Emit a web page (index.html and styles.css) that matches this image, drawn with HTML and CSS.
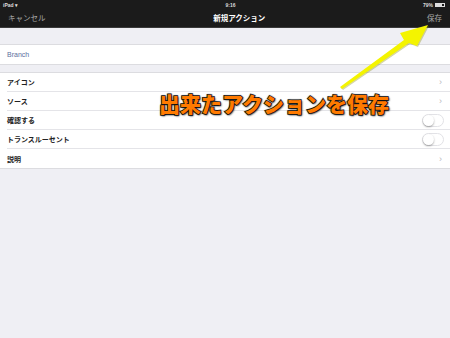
FILE: index.html
```html
<!DOCTYPE html>
<html lang="ja">
  <head>
    <meta charset="UTF-8" />
    <title>新規アクション</title>
    <link rel="stylesheet" href="styles.css">
  </head>
  <body>
    <header class="topbar">
      <div class="status">
        <span class="status-left">iPad <span class="wifi">&#9662;</span></span>
        <span class="status-time">9:16</span>
        <span class="status-right">79% <span class="battery"><span class="battery-level"></span></span></span>
      </div>
      <nav class="navbar">
        <span class="nav-btn">キャンセル</span>
        <span class="nav-title">新規アクション</span>
        <span class="nav-btn">保存</span>
      </nav>
    </header>

    <section class="group group-first">
      <div class="row"><span class="row-input">Branch</span></div>
    </section>

    <section class="group">
      <div class="row"><span>アイコン</span><span class="chevron">&#8250;</span></div>
      <div class="row"><span>ソース</span><span class="chevron">&#8250;</span></div>
      <div class="row"><span>確認する</span><span class="switch"></span></div>
      <div class="row"><span>トランスルーセント</span><span class="switch"></span></div>
      <div class="row"><span>説明</span><span class="chevron">&#8250;</span></div>
    </section>

    <svg class="arrow" width="450" height="338" viewBox="0 0 450 338">
      <polygon points="340,87 404,40 400,33 428,25 417,46 409,43 342,89" fill="#8a8a00" opacity="0.35" transform="translate(1,1)" />
      <polygon points="340,87 404,40 400,33 428,25 417,46 409,43 342,89" fill="#f4f400" />
    </svg>
    <div class="callout">出来たアクションを保存</div>
  </body>
</html>
```

FILE: styles.css
```css
* {
  box-sizing: border-box;
}

body {
  margin: 0;
  width: 450px;
  height: 338px;
  overflow: hidden;
  background: #efeff4;
  font-family: "Noto Sans CJK JP", "Liberation Sans", sans-serif;
  position: relative;
}

.topbar {
  background: #1b1b1b;
  height: 28px;
  border-bottom: 1px solid #3a3a3a;
}

.status {
  display: flex;
  justify-content: space-between;
  align-items: center;
  height: 9px;
  padding: 0 5px 0 3px;
  color: #ddd;
  font-family: "Liberation Sans", sans-serif;
  font-size: 5px;
  font-weight: bold;
}

.status-time {
  padding-left: 20px;
}

.wifi {
  font-size: 5px;
}

.status-right {
  display: flex;
  align-items: center;
  gap: 2px;
}

.battery {
  display: inline-block;
  width: 10px;
  height: 4px;
  border: 1px solid #ddd;
  padding: 0;
}

.battery-level {
  display: block;
  width: 75%;
  height: 100%;
  background: #ddd;
}

.navbar {
  display: flex;
  justify-content: space-between;
  align-items: center;
  height: 18px;
  padding: 0 8px 2px 8px;
}

.nav-btn {
  color: #a8a8a8;
  font-size: 7.5px;
}

.nav-title {
  color: #fff;
  font-size: 7.5px;
  font-weight: bold;
  padding-left: 6px;
}

.group {
  background: #fff;
  border-top: 1px solid #dcdce0;
  border-bottom: 1px solid #dcdce0;
  margin-top: 7px;
}

.group-first {
  margin-top: 16px;
}

.row {
  display: flex;
  justify-content: space-between;
  align-items: center;
  height: 19px;
  margin-left: 7px;
  padding-right: 8px;
  border-bottom: 1px solid #e4e4e8;
  font-size: 7px;
  font-weight: bold;
  color: #222;
}

.row:last-child {
  border-bottom: none;
}

.row-input {
  color: #5b6e9e;
  font-family: "Liberation Sans", sans-serif;
  font-weight: normal;
}

.chevron {
  color: #b8b8bc;
  font-family: "Liberation Sans", sans-serif;
  font-size: 9px;
  font-weight: normal;
}

.switch {
  position: relative;
  width: 22px;
  height: 13px;
  margin-right: -2px;
  border: 1px solid #e2e2e6;
  border-radius: 7px;
  background: #fff;
}

.switch::after {
  content: "";
  position: absolute;
  top: 0;
  left: 0;
  width: 11px;
  height: 11px;
  border-radius: 50%;
  background: #fff;
  box-shadow: 0 1px 2px rgba(0, 0, 0, 0.35);
}

.arrow {
  position: absolute;
  top: 0;
  left: 0;
}

.callout {
  position: absolute;
  top: 88px;
  left: 159px;
  font-size: 21px;
  font-weight: 900;
  letter-spacing: 0;
  color: #ff7a00;
  -webkit-text-stroke: 1.5px #111;
  paint-order: stroke fill;
  text-shadow: 0 0 2px #111, 1px 1px 2px #111;
  white-space: nowrap;
}
```
